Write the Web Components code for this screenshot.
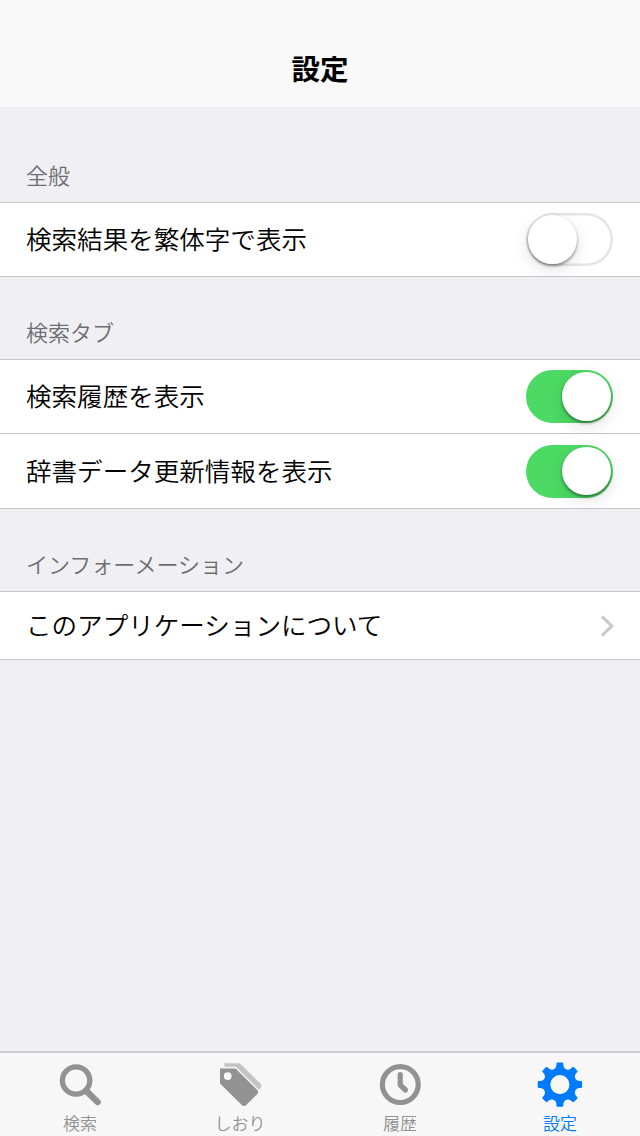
<!DOCTYPE html>
<html lang="ja">
<head>
<meta charset="utf-8">
<title>設定</title>
<style>
  body {
    margin: 0;
    font-family: "Noto Sans CJK JP", "Liberation Sans", sans-serif;
  }
</style>
</head>
<body>
<settings-app>
  <nav-header slot="header">設定</nav-header>
  <settings-group style="--label-top: 51px">
    <span slot="label">全般</span>
    <settings-row>検索結果を繁体字で表示<toggle-switch slot="control"></toggle-switch></settings-row>
  </settings-group>
  <settings-group style="--label-top: 38px">
    <span slot="label">検索タブ</span>
    <settings-row>検索履歴を表示<toggle-switch slot="control" on></toggle-switch></settings-row>
    <settings-row style="--row-height: 74px">辞書データ更新情報を表示<toggle-switch slot="control" on></toggle-switch></settings-row>
  </settings-group>
  <settings-group style="--label-top: 38px">
    <span slot="label">インフォーメーション</span>
    <settings-row style="--row-height: 67px">このアプリケーションについて<chevron-right slot="control"></chevron-right></settings-row>
  </settings-group>
  <tab-bar slot="tabs">
    <tab-item icon="search">検索</tab-item>
    <tab-item icon="tags">しおり</tab-item>
    <tab-item icon="clock">履歴</tab-item>
    <tab-item icon="gear" active>設定</tab-item>
  </tab-bar>
</settings-app>

<script>
// creates the template once for each component
function createTemplate(html) {
  const template = document.createElement("template");
  template.innerHTML = html;
  return template;
}

class BaseElement extends HTMLElement {
  constructor() {
    super();
    this.attachShadow({ mode: "open" });
    this.shadowRoot.appendChild(this.constructor.template.content.cloneNode(true));
  }
}

// full screen layout: header, list, tabs
class SettingsApp extends BaseElement {
  static template = createTemplate(`
    <style>
      :host {
        display: flex;
        flex-direction: column;
        width: 640px;
        height: 1136px;
        overflow: hidden;
        background: #efeff4;
        color: #000;
      }
      main {
        flex: 1;
        min-height: 0;
      }
    </style>
    <slot name="header"></slot>
    <main><slot></slot></main>
    <slot name="tabs"></slot>
  `);
}

class NavHeader extends BaseElement {
  static template = createTemplate(`
    <style>
      :host {
        display: flex;
        justify-content: center;
        box-sizing: border-box;
        height: 107px;
        padding-top: 48px;
        background: #f9f9f9;
      }
      h1 {
        margin: 0;
        font-size: 28.5px;
        font-weight: 700;
        line-height: 40px;
      }
    </style>
    <h1><slot></slot></h1>
  `);
}

class SettingsGroup extends BaseElement {
  static template = createTemplate(`
    <style>
      :host {
        display: block;
      }
      .label {
        padding: var(--label-top) 26px 12px;
        font-size: 22px;
        font-weight: 350;
        line-height: 32px;
        color: #6d6d72;
      }
      .rows {
        display: flex;
        flex-direction: column;
        gap: 1px;
        padding: 1px 0;
        background: #c8c7cc;
      }
    </style>
    <div class="label"><slot name="label"></slot></div>
    <div class="rows"><slot></slot></div>
  `);
}

class SettingsRow extends BaseElement {
  static template = createTemplate(`
    <style>
      :host {
        display: flex;
        align-items: center;
        justify-content: space-between;
        height: var(--row-height, 73px);
        padding: 0 27px 0 26px;
        background: #fff;
      }
      .text {
        padding-bottom: 3px;
        font-size: 25.55px;
        font-weight: 350;
        line-height: 36px;
      }
    </style>
    <span class="text"><slot></slot></span>
    <slot name="control"></slot>
  `);
}

class ToggleSwitch extends BaseElement {
  static template = createTemplate(`
    <style>
      :host {
        display: flex;
        box-sizing: border-box;
        width: 87px;
        height: 53px;
        padding: 2px;
        border-radius: 27px;
        background: #fff;
        box-shadow: inset 0 0 0 2.5px #e5e5e5;
      }
      :host([on]) {
        justify-content: flex-end;
        padding-right: 2.5px;
        background: #4cd964;
        box-shadow: none;
      }
      .knob {
        width: 48.5px;
        height: 48.5px;
        border-radius: 50%;
        background: #fff;
        box-shadow: 0 2px 3px rgba(0, 0, 0, .4), 0 5px 16px rgba(0, 0, 0, .12);
      }
    </style>
    <div class="knob"></div>
  `);
}

class ChevronRight extends BaseElement {
  static template = createTemplate(`
    <style>
      :host {
        display: block;
        margin-right: -2px;
      }
      svg {
        display: block;
      }
    </style>
    <svg width="15" height="22" viewBox="0 0 15 22">
      <path d="M2 1.5 11.8 11 2 20.5" fill="none" stroke="#c7c7cc" stroke-width="3"/>
    </svg>
  `);
}

class TabBar extends BaseElement {
  static template = createTemplate(`
    <style>
      :host {
        display: grid;
        grid-template-columns: repeat(4, 1fr);
        box-sizing: border-box;
        height: 85px;
        border-top: 2px solid #cbcbcd;
        background: #f7f7f7;
      }
    </style>
    <slot></slot>
  `);
}

// every icon is drawn on a 48x48 box
const icons = {
  search: `
    <circle cx="20.1" cy="20.5" r="13.7" fill="none" stroke="currentColor" stroke-width="5.3"/>
    <path d="M30 30.6 41.6 42" stroke="currentColor" stroke-width="6.4" stroke-linecap="round"/>`,
  tags: `
    <path d="M8.4 3.2H23.8L44.7 24Q46 26 44.6 28L43 29.8L20 6.8H8.4Z" fill="currentColor" opacity=".5"/>
    <path fill-rule="evenodd" d="M4 8.4H19.6L41.3 30Q42.8 32 41.3 34L30 45.3Q28 46.8 26 45.3L4 23.5ZM11.7 12.2a3.9 3.9 0 1 0 0 7.8a3.9 3.9 0 1 0 0-7.8Z" fill="currentColor"/>`,
  clock: `
    <circle cx="24.3" cy="24.6" r="17.9" fill="none" stroke="currentColor" stroke-width="5.2"/>
    <path d="M24.2 14.5V25L29.5 30" fill="none" stroke="currentColor" stroke-width="5.2" stroke-linecap="round" stroke-linejoin="round"/>`,
  gear: `
    <g fill="currentColor" transform="translate(23.9 24.6)">
      <path id="tooth" d="M-2.2-22.2H2.2Q3.5-22.2 3.5-20.9V-18.8Q3.9-16.4 6.5-15L6-10H-6L-6.5-15Q-3.9-16.4-3.5-18.8V-20.9Q-3.5-22.2-2.2-22.2Z"/>
      <use href="#tooth" transform="rotate(45)"/>
      <use href="#tooth" transform="rotate(90)"/>
      <use href="#tooth" transform="rotate(135)"/>
      <use href="#tooth" transform="rotate(180)"/>
      <use href="#tooth" transform="rotate(225)"/>
      <use href="#tooth" transform="rotate(270)"/>
      <use href="#tooth" transform="rotate(315)"/>
    </g>
    <circle cx="23.9" cy="24.6" r="12.8" fill="none" stroke="currentColor" stroke-width="6.6"/>
    <circle cx="23.9" cy="24.6" r="9.3" fill="#f7f7f7"/>`
};

class TabItem extends BaseElement {
  static template = createTemplate(`
    <style>
      :host {
        display: flex;
        flex-direction: column;
        align-items: center;
        padding-top: 7px;
        color: #929292;
      }
      :host([active]) {
        color: #007aff;
      }
      svg {
        display: block;
        width: 48px;
        height: 48px;
      }
      .label {
        margin-top: 3px;
        font-size: 17px;
        font-weight: 350;
        line-height: 24px;
      }
    </style>
    <svg viewBox="0 0 48 48"></svg>
    <span class="label"><slot></slot></span>
  `);

  connectedCallback() {
    this.shadowRoot.querySelector("svg").innerHTML = icons[this.getAttribute("icon")];
  }
}

customElements.define("settings-app", SettingsApp);
customElements.define("nav-header", NavHeader);
customElements.define("settings-group", SettingsGroup);
customElements.define("settings-row", SettingsRow);
customElements.define("toggle-switch", ToggleSwitch);
customElements.define("chevron-right", ChevronRight);
customElements.define("tab-bar", TabBar);
customElements.define("tab-item", TabItem);
</script>
</body>
</html>
